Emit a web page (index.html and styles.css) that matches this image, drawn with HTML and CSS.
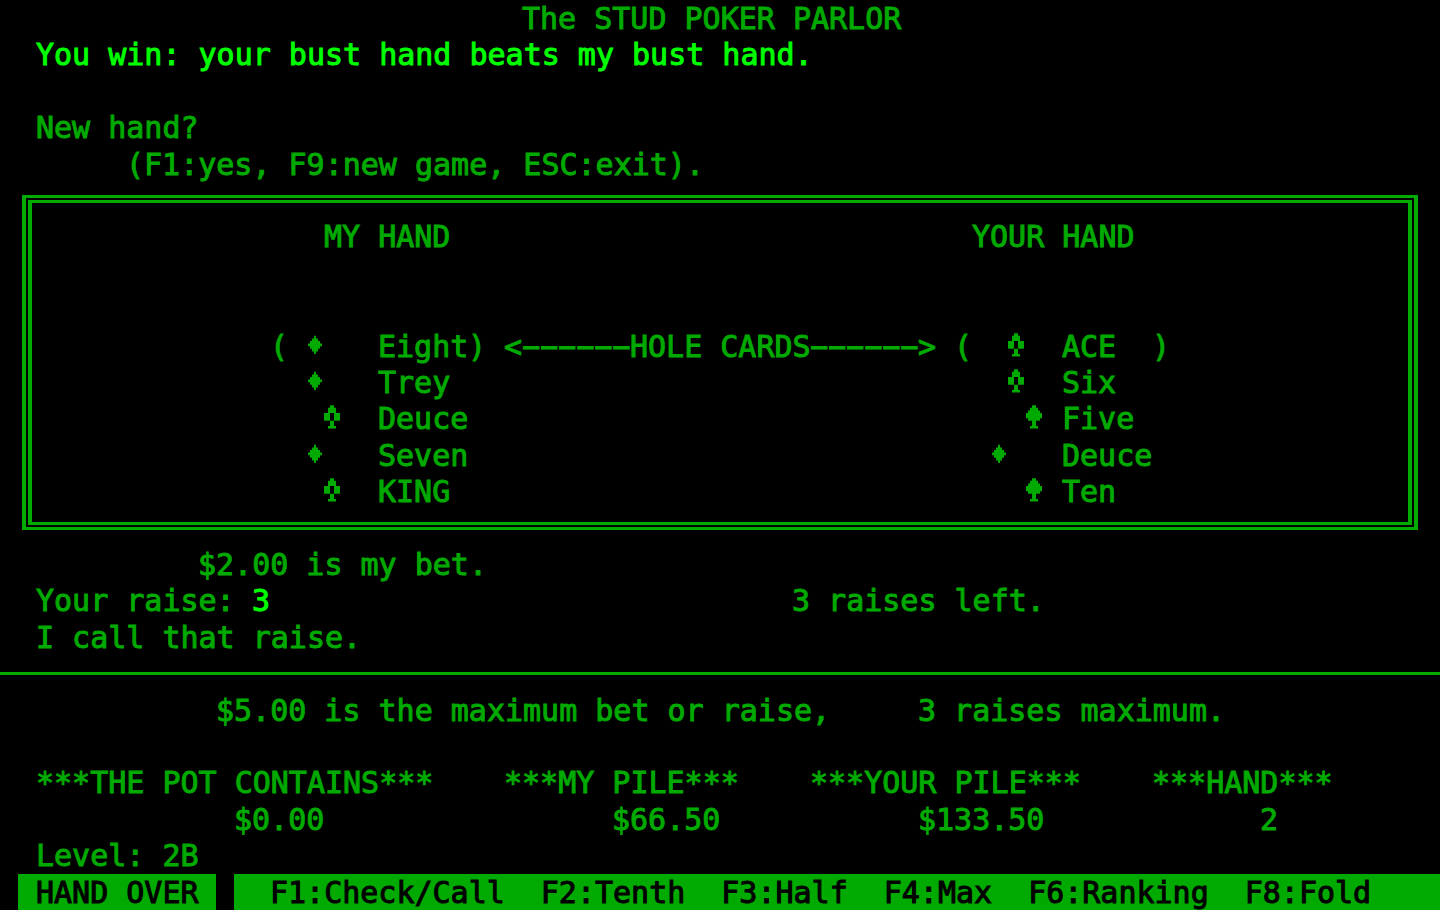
FILE: index.html
```html
<!DOCTYPE html>
<html lang="en">
<head>
<meta charset="UTF-8">
<meta name="viewport" content="width=device-width, initial-scale=1.0">
<title>The STUD POKER PARLOR</title>
<link rel="stylesheet" href="styles.css">
</head>
<body>

<!-- suit shapes, drawn on a 9x14 character cell -->
<svg class="defs" width="0" height="0" aria-hidden="true">
    <symbol id="diamond" viewBox="0 0 9 14" preserveAspectRatio="none">
        <path d="M4 3h1v1h1v1h1v1h1v1h-1v1h-1v1h-1v1h-1v-1h-1v-1h-1v-1h-1v-1h1v-1h1v-1h1z"/>
    </symbol>
    <symbol id="club" viewBox="0 0 9 14" preserveAspectRatio="none">
        <path d="M3 2h2v1h1v2h-4v-2h1z M0 5h3v3h-3z M5 5h3v3h-3z M3 8h2v2h1v1h-4v-1h1z"/>
    </symbol>
    <symbol id="spade" viewBox="0 0 9 14" preserveAspectRatio="none">
        <path d="M3 2h2v1h1v1h1v1h1v2h-1v1h-2v2h1v1h-4v-1h1v-2h-2v-1h-1v-2h1v-1h1v-1h1z"/>
    </symbol>
</svg>

<main class="screen">
    <section class="block messages">
        <h1 class="row1 c29">The STUD POKER PARLOR</h1>
        <p class="row2 c2 bright">You win: your bust hand beats my bust hand.</p>
        <p class="row4 c2">New hand?</p>
        <p class="row5 c7">(F1:yes, F9:new game, ESC:exit).</p>
    </section>

    <section class="block hands">
        <div class="frame"><div class="frame-inner"></div></div>

        <h2 class="row2 c18">MY HAND</h2>
        <h2 class="row2 c54">YOUR HAND</h2>

        <span class="row5 c15">(</span>
        <svg class="suit row5 c17" role="img" aria-label="Diamond"><use href="#diamond"/></svg>
        <span class="row5 c21">Eight</span>
        <span class="row5 c26">)</span>
        <span class="row5 c28">&lt;</span>
        <span class="row5 c29">−−−−−−</span>
        <span class="row5 c35">HOLE CARDS</span>
        <span class="row5 c45">−−−−−−</span>
        <span class="row5 c51">&gt;</span>
        <span class="row5 c53">(</span>
        <svg class="suit row5 c56" role="img" aria-label="Club"><use href="#club"/></svg>
        <span class="row5 c59">ACE</span>
        <span class="row5 c64">)</span>

        <svg class="suit row6 c17" role="img" aria-label="Diamond"><use href="#diamond"/></svg>
        <span class="row6 c21">Trey</span>
        <svg class="suit row6 c56" role="img" aria-label="Club"><use href="#club"/></svg>
        <span class="row6 c59">Six</span>

        <svg class="suit row7 c18" role="img" aria-label="Club"><use href="#club"/></svg>
        <span class="row7 c21">Deuce</span>
        <svg class="suit row7 c57" role="img" aria-label="Spade"><use href="#spade"/></svg>
        <span class="row7 c59">Five</span>

        <svg class="suit row8 c17" role="img" aria-label="Diamond"><use href="#diamond"/></svg>
        <span class="row8 c21">Seven</span>
        <svg class="suit row8 c55" role="img" aria-label="Diamond"><use href="#diamond"/></svg>
        <span class="row8 c59">Deuce</span>

        <svg class="suit row9 c18" role="img" aria-label="Club"><use href="#club"/></svg>
        <span class="row9 c21">KING</span>
        <svg class="suit row9 c57" role="img" aria-label="Spade"><use href="#spade"/></svg>
        <span class="row9 c59">Ten</span>
    </section>

    <section class="block betting">
        <p class="row1 c11">$2.00 is my bet.</p>
        <label class="row2 c2" for="raise">Your raise:</label>
        <input class="row2 c14 bright" type="text" id="raise" value="3" autocomplete="off">
        <p class="row2 c44">3 raises left.</p>
        <p class="row3 c2">I call that raise.</p>
        <hr class="row4">
    </section>

    <section class="block limits">
        <p class="row1 c12">$5.00 is the maximum bet or raise,</p>
        <p class="row1 c51">3 raises maximum.</p>
    </section>

    <table class="block piles">
        <thead>
            <tr>
                <th class="row1 c2">***THE POT CONTAINS***</th>
                <th class="row1 c28">***MY PILE***</th>
                <th class="row1 c45">***YOUR PILE***</th>
                <th class="row1 c64">***HAND***</th>
            </tr>
        </thead>
        <tbody>
            <tr>
                <td class="row2 c13">$0.00</td>
                <td class="row2 c34">$66.50</td>
                <td class="row2 c51">$133.50</td>
                <td class="row2 c70">2</td>
            </tr>
        </tbody>
    </table>

    <footer class="block status">
        <p class="row1 c2">Level: 2B</p>
        <p class="state">HAND OVER</p>
        <nav class="keys">
            <button type="button">F1:Check/Call</button>
            <button type="button">F2:Tenth</button>
            <button type="button">F3:Half</button>
            <button type="button">F4:Max</button>
            <button type="button">F6:Ranking</button>
            <button type="button">F8:Fold</button>
        </nav>
    </footer>
</main>

</body>
</html>
```
FILE: styles.css
```css
* {
    box-sizing: border-box;
}
body {
    margin: 0;
    background-color: #000;
    color: #00aa00;
    font-family: "DejaVu Sans Mono", monospace;
    font-size: 30px;
    line-height: 37px;
    -webkit-text-stroke: 1px currentColor;
}
h1, h2, p, th, td {
    margin: 0;
    padding: 0;
    font-size: 30px;
    font-weight: normal;
    text-align: left;
}
.defs {
    position: absolute;
}

/* 80x25 text mode screen */
.screen {
    display: grid;
    grid-template-columns: repeat(80, minmax(0, 1fr));
    grid-template-rows: repeat(25, minmax(0, 1fr));
    height: 100vh;
    min-height: 900px;
    overflow: hidden;
    white-space: nowrap;
}
.block {
    display: grid;
    grid-column: 1 / -1;
    grid-template-columns: subgrid;
    grid-template-rows: subgrid;
}
.messages { grid-row: 1 / span 5; }
.hands { grid-row: 6 / span 10; }
.betting { grid-row: 16 / span 4; }
.limits { grid-row: 20 / span 1; }
.piles { grid-row: 22 / span 2; }
.status { grid-row: 24 / span 2; }

.piles thead, .piles tbody, .piles tr {
    display: contents;
}

/* rows inside a block */
.row1 { grid-row: 1; }
.row2 { grid-row: 2; }
.row3 { grid-row: 3; }
.row4 { grid-row: 4; }
.row5 { grid-row: 5; }
.row6 { grid-row: 6; }
.row7 { grid-row: 7; }
.row8 { grid-row: 8; }
.row9 { grid-row: 9; }

/* text columns, counted from 0 */
.c2 { grid-column: 3 / -1; }
.c7 { grid-column: 8 / -1; }
.c11 { grid-column: 12 / -1; }
.c12 { grid-column: 13 / -1; }
.c13 { grid-column: 14 / -1; }
.c14 { grid-column: 15 / span 4; }
.c15 { grid-column: 16; }
.c17 { grid-column: 18; }
.c18 { grid-column: 19; }
.c21 { grid-column: 22; }
.c26 { grid-column: 27; }
.c28 { grid-column: 29; }
.c29 { grid-column: 30; }
.c34 { grid-column: 35; }
.c35 { grid-column: 36; }
.c44 { grid-column: 45; }
.c45 { grid-column: 46; }
.c51 { grid-column: 52; }
.c53 { grid-column: 54; }
.c54 { grid-column: 55; }
.c55 { grid-column: 56; }
.c56 { grid-column: 57; }
.c57 { grid-column: 58; }
.c59 { grid-column: 60; }
.c64 { grid-column: 65; }
.c70 { grid-column: 71; }

.bright {
    color: #00ff00;
}

/* double line box round the cards */
.frame {
    grid-area: 1 / 1 / -1 / -1;
    display: grid;
    margin: 13px 22px 16px;
    padding: 2px;
    border: solid #00aa00;
    border-width: 3px 4px;
}
.frame-inner {
    border: solid #00aa00;
    border-width: 3px 4px;
}
.suit {
    width: 100%;
    height: 100%;
    fill: currentColor;
    -webkit-text-stroke: 0;
}

input {
    width: 100%;
    height: 37px;
    padding: 0;
    border: none;
    outline: none;
    background: none;
    font: inherit;
    -webkit-text-stroke: 1px currentColor;
}
hr {
    grid-column: 1 / -1;
    align-self: center;
    width: 100%;
    height: 3px;
    margin: 0;
    border: none;
    background-color: #00aa00;
}

/* bottom line, inverse video */
.state, .keys {
    grid-row: 2;
    background-color: #00aa00;
    color: #000;
}
.state {
    grid-column: 2 / span 11;
    padding-left: 18px;
}
.keys {
    grid-column: 14 / -1;
    display: flex;
    gap: 36px;
    padding-left: 36px;
}
button {
    padding: 0;
    border: none;
    background: none;
    color: inherit;
    font: inherit;
    -webkit-text-stroke: 1px currentColor;
    cursor: pointer;
}
```
